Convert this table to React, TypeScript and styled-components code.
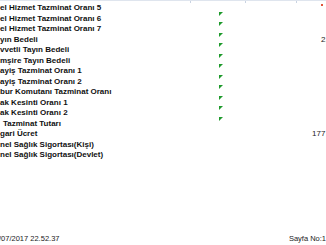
import styled, { createGlobalStyle } from "styled-components";

const GlobalStyle = createGlobalStyle`
    html, body {
        margin: 0;
        padding: 0;
        background: #ffffff;
        overflow: hidden;
    }
    body {
        font-family: "Liberation Sans", Arial, sans-serif;
    }
`;

const Sheet = styled.div`
    position: relative;
    width: 326px;
    height: 245px;
    display: flex;
    flex-direction: column;
    overflow: hidden;
    border-top: 1px solid #dfe5ee;
    box-sizing: border-box;
`;

const Ruler = styled.div`
    display: flex;
    height: 0;
`;

const Tick = styled.span<{ $left: number }>`
    position: absolute;
    top: 0;
    left: ${p => p.$left}px;
    width: 1px;
    height: 2px;
    background: #c9d3e2;
`;

const Comment = styled.span`
    position: absolute;
    top: 3px;
    left: 321px;
    width: 2px;
    height: 2px;
    background: #e0533a;
`;

const Rows = styled.div`
    padding-top: 2px;
`;

const Row = styled.div`
    display: grid;
    grid-template-columns: 219px 93px 1fr;
    height: 10.5px;
    line-height: 10.5px;
    font-size: 8px;
    color: #111;
    white-space: nowrap;
`;

const Label = styled.div<{ $indent?: number }>`
    font-weight: bold;
    padding-left: ${p => p.$indent ?? 0}px;
    overflow: hidden;
`;

const FlagCell = styled.div`
    position: relative;
`;

const Flag = styled.span`
    position: absolute;
    top: -2px;
    left: 0;
    width: 0;
    height: 0;
    border-top: 4px solid #1e9a2c;
    border-right: 4px solid transparent;
`;

const Value = styled.div<{ $indent?: number }>`
    padding-left: ${p => p.$indent ?? 0}px;
    color: #222;
`;

const Footer = styled.div`
    margin-top: auto;
    display: flex;
    justify-content: space-between;
    height: 10px;
    line-height: 10px;
    margin-bottom: 1px;
    font-size: 7.5px;
    color: #222;
    white-space: nowrap;
`;

const Stamp = styled.span`
    margin-left: -1px;
`;

const Page = styled.span`
    margin-right: 0;
`;

interface LineItem {
    label: string;
    indent?: number;
    flag?: boolean;
    value?: string;
    valueIndent?: number;
}

const items: LineItem[] = [
    { label: "el Hizmet Tazminat Oranı 5" },
    { label: "el Hizmet Tazminat Oranı 6", flag: true },
    { label: "el Hizmet Tazminat Oranı 7", flag: true },
    { label: "yın Bedeli", flag: true, value: "21", valueIndent: 9 },
    { label: "vvetli Tayın Bedeli", flag: true },
    { label: "mşire Tayın Bedeli", flag: true },
    { label: "ayiş Tazminat Oranı 1", flag: true },
    { label: "ayiş Tazminat Oranı 2", flag: true },
    { label: "bur Komutanı Tazminat Oranı", flag: true },
    { label: "ak Kesinti Oranı 1", flag: true },
    { label: "ak Kesinti Oranı 2", flag: true },
    { label: "Tazminat Tutarı", indent: 3, flag: true },
    { label: "gari Ücret", value: "177" },
    { label: "nel Sağlık Sigortası(Kişi)" },
    { label: "nel Sağlık Sigortası(Devlet)" },
];

function App() {
    return (
        <Sheet>
            <GlobalStyle />
            <Ruler>
                {[190, 245, 296].map(x => <Tick key={x} $left={x} />)}
            </Ruler>
            <Comment />
            <Rows>
                {items.map((item, i) => (
                    <Row key={i}>
                        <Label $indent={item.indent}>{item.label}</Label>
                        <FlagCell>{item.flag && <Flag />}</FlagCell>
                        <Value $indent={item.valueIndent}>{item.value}</Value>
                    </Row>
                ))}
            </Rows>
            <Footer>
                <Stamp>/07/2017 22.52.37</Stamp>
                <Page>Sayfa No:1</Page>
            </Footer>
        </Sheet>
    );
}

export default App;
